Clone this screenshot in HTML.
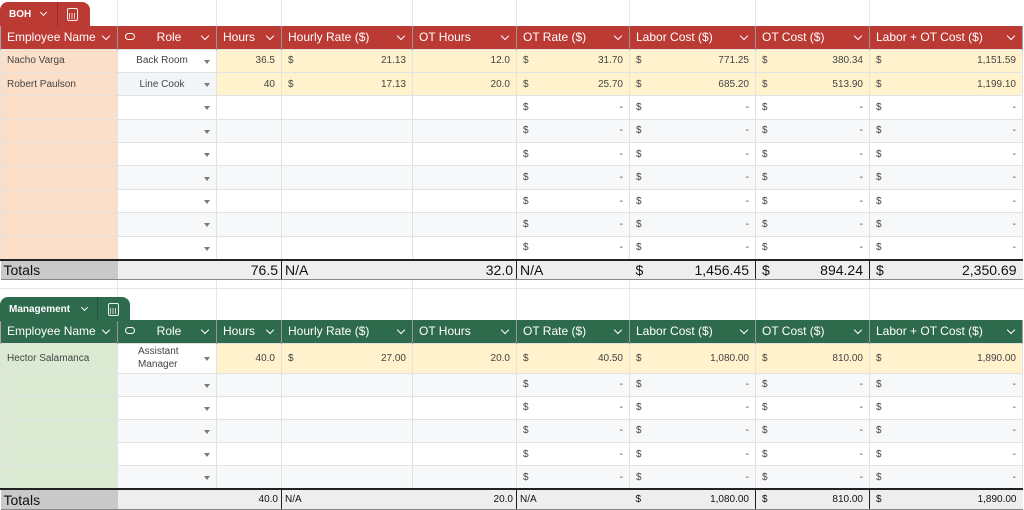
<!DOCTYPE html>
<html><head><meta charset="utf-8"><style>
*{margin:0;padding:0;box-sizing:border-box}
body{width:1024px;height:510px;overflow:hidden;background:#fff;font-family:"Liberation Sans",sans-serif;position:relative}
table{position:absolute;left:0;border-collapse:collapse;table-layout:fixed;width:1022px}
td{border:1px solid #e2e2e2;font-size:10px;color:#444;padding:0 6px;white-space:nowrap;overflow:hidden;position:relative}
.h td{color:#fff;font-size:12px;border-color:rgba(0,0,0,.35);border-width:0 1px}
.r{text-align:right}
.c{text-align:center}
.d span{float:left}
.dd::after{content:"";position:absolute;right:6px;top:50%;margin-top:-1px;border:3px solid transparent;border-top:4px solid #7a7a7a;border-bottom:0}
.ch::after{content:"";position:absolute;right:8px;top:50%;margin-top:-4px;width:5px;height:5px;border-right:1.5px solid #fff;border-bottom:1.5px solid #fff;transform:rotate(45deg)}
.tot td{background:#eee;font-size:14px;color:#111;border-top:2px solid #222;border-bottom:1px solid #888;border-left:0;border-right:0}
.tot td.b{border-right:1px solid #222}
.tab{position:absolute;left:0;color:#fff;font-weight:bold;font-size:10px;border-radius:8px 8px 0 0;height:24px}
.tab .t{position:absolute;left:9px;top:7px}
.tab .cv{position:absolute;top:8px;width:5px;height:5px;border-right:1.5px solid #fff;border-bottom:1.5px solid #fff;transform:rotate(45deg)}
.tab .ic{position:absolute;top:6px;width:11px;height:13px;border:1.5px solid #fff;border-radius:2px;opacity:.9}
.tab .ic::after{content:"";position:absolute;left:1px;right:1px;top:4px;bottom:1px;background:repeating-linear-gradient(90deg,#fff 0 1px,transparent 1px 2.5px);opacity:.8}
.tab .sep{position:absolute;top:0;bottom:0;width:1px;background:rgba(0,0,0,.2)}
.grid{position:absolute;top:0;height:510px;width:1px;background:#e6e6e6}
.rl{padding-right:16px}
</style></head><body>
<div class="grid" style="left:117px"></div><div class="grid" style="left:216px"></div><div class="grid" style="left:281px"></div><div class="grid" style="left:412px"></div><div class="grid" style="left:516px"></div><div class="grid" style="left:629px"></div><div class="grid" style="left:755px"></div><div class="grid" style="left:869px"></div>
<div style="position:absolute;left:0;right:0;top:288px;height:1px;background:#e6e6e6"></div>

<div class="tab" style="top:2px;width:90px;background:#bb3a33">
<span class="t">BOH</span><div class="cv" style="left:41px"></div><div class="sep" style="left:57px"></div><div class="ic" style="left:67px"></div></div>

<table style="top:26px">
<colgroup><col style="width:117px"><col style="width:99px"><col style="width:65px"><col style="width:131px"><col style="width:104px"><col style="width:113px"><col style="width:126px"><col style="width:114px"><col style="width:153px"></colgroup>
<tr class="h" style="height:23px;background:#bb3a33"><td class="ch" style="padding-left:6px">Employee Name</td><td class="ch c" style="padding:0 0 0 4px">Role<span style="position:absolute;left:7px;top:7px;width:10px;height:7px;border:1.3px solid #fff;border-radius:4px"></span></td><td class="ch">Hours</td><td class="ch">Hourly Rate ($)</td><td class="ch">OT Hours</td><td class="ch">OT Rate ($)</td><td class="ch">Labor Cost ($)</td><td class="ch">OT Cost ($)</td><td class="ch">Labor + OT Cost ($)</td></tr>
<tr style="height:23.4px;background:#fff2cc"><td style="background:#fbdfc9">Nacho Varga</td><td class="c dd rl" style="background:#fff">Back Room</td><td class="r">36.5</td><td class="r d"><span>$</span>21.13</td><td class="r">12.0</td><td class="r d"><span>$</span>31.70</td><td class="r d"><span>$</span>771.25</td><td class="r d"><span>$</span>380.34</td><td class="r d"><span>$</span>1,151.59</td></tr>
<tr style="height:23.4px;background:#fff2cc"><td style="background:#fbdfc9">Robert Paulson</td><td class="c dd rl" style="background:#f3f6f9">Line Cook</td><td class="r">40</td><td class="r d"><span>$</span>17.13</td><td class="r">20.0</td><td class="r d"><span>$</span>25.70</td><td class="r d"><span>$</span>685.20</td><td class="r d"><span>$</span>513.90</td><td class="r d"><span>$</span>1,199.10</td></tr>
<tr style="height:23.4px"><td style="background:#fbdfc9"></td><td class="dd"></td><td></td><td></td><td></td><td class="r d"><span>$</span>-</td><td class="r d"><span>$</span>-</td><td class="r d"><span>$</span>-</td><td class="r d"><span>$</span>-</td></tr>
<tr style="height:23.4px;background:#f7f8fa"><td style="background:#fbdfc9"></td><td class="dd"></td><td></td><td></td><td></td><td class="r d"><span>$</span>-</td><td class="r d"><span>$</span>-</td><td class="r d"><span>$</span>-</td><td class="r d"><span>$</span>-</td></tr>
<tr style="height:23.4px"><td style="background:#fbdfc9"></td><td class="dd"></td><td></td><td></td><td></td><td class="r d"><span>$</span>-</td><td class="r d"><span>$</span>-</td><td class="r d"><span>$</span>-</td><td class="r d"><span>$</span>-</td></tr>
<tr style="height:23.4px;background:#f7f8fa"><td style="background:#fbdfc9"></td><td class="dd"></td><td></td><td></td><td></td><td class="r d"><span>$</span>-</td><td class="r d"><span>$</span>-</td><td class="r d"><span>$</span>-</td><td class="r d"><span>$</span>-</td></tr>
<tr style="height:23.4px"><td style="background:#fbdfc9"></td><td class="dd"></td><td></td><td></td><td></td><td class="r d"><span>$</span>-</td><td class="r d"><span>$</span>-</td><td class="r d"><span>$</span>-</td><td class="r d"><span>$</span>-</td></tr>
<tr style="height:23.4px;background:#f7f8fa"><td style="background:#fbdfc9"></td><td class="dd"></td><td></td><td></td><td></td><td class="r d"><span>$</span>-</td><td class="r d"><span>$</span>-</td><td class="r d"><span>$</span>-</td><td class="r d"><span>$</span>-</td></tr>
<tr style="height:23.4px"><td style="background:#fbdfc9"></td><td class="dd"></td><td></td><td></td><td></td><td class="r d"><span>$</span>-</td><td class="r d"><span>$</span>-</td><td class="r d"><span>$</span>-</td><td class="r d"><span>$</span>-</td></tr>
<tr class="tot" style="height:20px"><td style="background:#c9c9c9;padding-left:3px">Totals</td><td></td><td class="r b" style="padding-right:3px">76.5</td><td style="padding-left:3px">N/A</td><td class="r b" style="padding-right:3px">32.0</td><td style="padding-left:3px">N/A</td><td class="r d b"><span>$</span>1,456.45</td><td class="r d b"><span>$</span>894.24</td><td class="r d"><span>$</span>2,350.69</td></tr>
</table>

<div class="tab" style="top:297px;width:130px;background:#2e6a4c">
<span class="t">Management</span><div class="cv" style="left:82px"></div><div class="sep" style="left:97px"></div><div class="ic" style="left:108px"></div></div>

<table style="top:320px">
<colgroup><col style="width:117px"><col style="width:99px"><col style="width:65px"><col style="width:131px"><col style="width:104px"><col style="width:113px"><col style="width:126px"><col style="width:114px"><col style="width:153px"></colgroup>
<tr class="h" style="height:23px;background:#2e6a4c"><td class="ch">Employee Name</td><td class="ch c" style="padding:0 0 0 4px">Role<span style="position:absolute;left:7px;top:7px;width:10px;height:7px;border:1.3px solid #fff;border-radius:4px"></span></td><td class="ch">Hours</td><td class="ch">Hourly Rate ($)</td><td class="ch">OT Hours</td><td class="ch">OT Rate ($)</td><td class="ch">Labor Cost ($)</td><td class="ch">OT Cost ($)</td><td class="ch">Labor + OT Cost ($)</td></tr>
<tr style="height:30px;background:#fff2cc"><td style="background:#dbead3">Hector Salamanca</td><td class="dd" style="background:#fff;line-height:13px;padding-left:20px">Assistant<br>Manager</td><td class="r">40.0</td><td class="r d"><span>$</span>27.00</td><td class="r">20.0</td><td class="r d"><span>$</span>40.50</td><td class="r d"><span>$</span>1,080.00</td><td class="r d"><span>$</span>810.00</td><td class="r d"><span>$</span>1,890.00</td></tr>
<tr style="height:23.2px;background:#f7f8fa"><td style="background:#dbead3"></td><td class="dd"></td><td></td><td></td><td></td><td class="r d"><span>$</span>-</td><td class="r d"><span>$</span>-</td><td class="r d"><span>$</span>-</td><td class="r d"><span>$</span>-</td></tr>
<tr style="height:23.2px"><td style="background:#dbead3"></td><td class="dd"></td><td></td><td></td><td></td><td class="r d"><span>$</span>-</td><td class="r d"><span>$</span>-</td><td class="r d"><span>$</span>-</td><td class="r d"><span>$</span>-</td></tr>
<tr style="height:23.2px;background:#f7f8fa"><td style="background:#dbead3"></td><td class="dd"></td><td></td><td></td><td></td><td class="r d"><span>$</span>-</td><td class="r d"><span>$</span>-</td><td class="r d"><span>$</span>-</td><td class="r d"><span>$</span>-</td></tr>
<tr style="height:23.2px"><td style="background:#dbead3"></td><td class="dd"></td><td></td><td></td><td></td><td class="r d"><span>$</span>-</td><td class="r d"><span>$</span>-</td><td class="r d"><span>$</span>-</td><td class="r d"><span>$</span>-</td></tr>
<tr style="height:23.2px;background:#f7f8fa"><td style="background:#dbead3"></td><td class="dd"></td><td></td><td></td><td></td><td class="r d"><span>$</span>-</td><td class="r d"><span>$</span>-</td><td class="r d"><span>$</span>-</td><td class="r d"><span>$</span>-</td></tr>
<tr class="tot" style="height:21px"><td style="background:#c9c9c9;padding-left:3px">Totals</td><td></td><td class="r b" style="padding-right:3px;font-size:10px">40.0</td><td style="padding-left:3px;font-size:10px">N/A</td><td class="r b" style="padding-right:3px;font-size:10px">20.0</td><td style="padding-left:3px;font-size:10px">N/A</td><td class="r d b" style="font-size:10px"><span>$</span>1,080.00</td><td class="r d b" style="font-size:10px"><span>$</span>810.00</td><td class="r d" style="font-size:10px"><span>$</span>1,890.00</td></tr>
</table>
</body></html>
